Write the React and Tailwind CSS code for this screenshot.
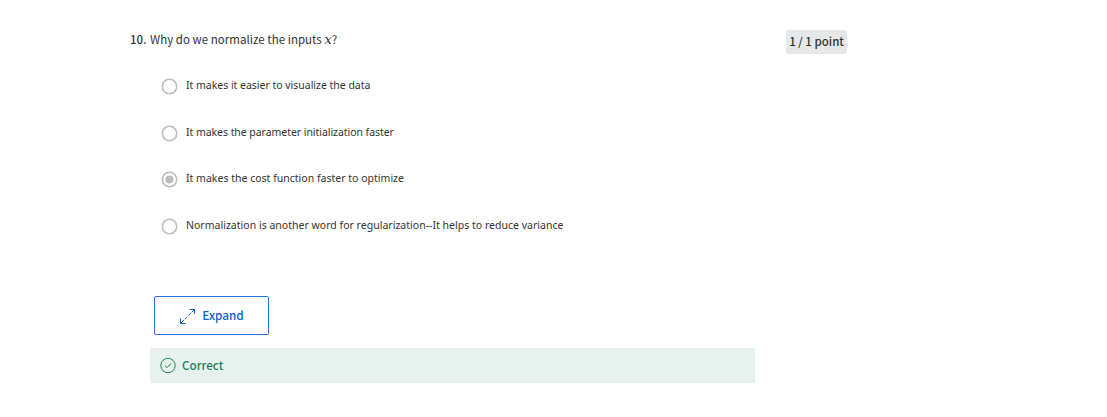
const options = [
  { text: "It makes it easier to visualize the data", row: "h-[47px]", spacing: "tracking-[-0.02px]" },
  { text: "It makes the parameter initialization faster", row: "h-[46px]", spacing: "tracking-[-0.05px]" },
  { text: "It makes the cost function faster to optimize", row: "h-[47px]", spacing: "tracking-[0.01px]", checked: true },
  { text: "Normalization is another word for regularization--It helps to reduce variance", row: "h-[47px]", spacing: "tracking-[0.015px]" },
];

function Radio({ checked }) {
  return (
    <svg className="-ml-px mt-[8px] size-[17px] shrink-0" viewBox="0 0 17 17" fill="none">
      <circle cx="8.5" cy="8.5" r="7.2" stroke="#bdbdbd" strokeWidth="1.6" />
      {checked && <circle cx="8.5" cy="8.5" r="4" fill="#bdbdbd" />}
    </svg>
  );
}

function ExpandIcon() {
  return (
    <svg className="size-4 shrink-0" viewBox="0 0 16 16" fill="none" stroke="currentColor" strokeWidth="1">
      <path d="M10.5 1.5h5V6M15.3 1.7 12.7 4.3M11.9 5.1 9.2 7.8M7.8 9.2l-2 2M5 12l-3 3M1.5 10.5v5H6.5" />
    </svg>
  );
}

function CheckIcon() {
  return (
    <svg className="size-4 shrink-0" viewBox="0 0 16 16" fill="none" stroke="currentColor" strokeWidth="1">
      <circle cx="8" cy="7.5" r="7.2" />
      <path d="m4.9 7.6 2.1 2.1 4-4.3" />
    </svg>
  );
}

export default function App() {
  return (
    <main className="flex h-[417px] w-[1107px] items-start overflow-hidden bg-white pl-[130px] font-['Noto_Sans_CJK_JP',sans-serif] text-[#333]">
      <section className="w-[656px]">
        <div className="mt-[29px] flex h-5 items-center whitespace-nowrap">
          <span className="w-[20px] text-[11.5px] font-medium leading-5">10.</span>
          <h1 className="text-[11.5px] leading-5 tracking-[0.03px]">
            Why do we normalize the inputs <span className="font-['DejaVu_Serif',serif] text-[13px] italic leading-none">x</span>?
          </h1>
        </div>
        <div className="ml-8 mt-[21px]">
          {options.map((option) => (
            <label key={option.text} className={`flex items-start font-['Noto_Sans',sans-serif] ${option.row}`}>
              <Radio checked={option.checked} />
              <span className={`ml-2 mt-[5px] whitespace-nowrap text-[10.5px] leading-5 ${option.spacing}`}>{option.text}</span>
            </label>
          ))}
        </div>
        <button className="ml-6 mt-[39px] flex h-[39px] w-[115px] items-center justify-center gap-[7px] rounded-[2px] border border-[#2a73dc] text-[11.7px] font-medium text-[#0f5fd0]">
          <ExpandIcon />
          <span className="pb-[2px]">Expand</span>
        </button>
        <div className="ml-5 mt-[13px] flex h-[35px] w-[605px] items-center gap-[6px] bg-[#e7f2ee] pl-[10px] text-[11.7px] font-medium text-[#1f8354]">
          <CheckIcon />
          <span className="pb-[2px]">Correct</span>
        </div>
      </section>
      <div className="mt-[30px] flex h-6 w-[61px] items-center justify-center whitespace-nowrap rounded-[3px] bg-[#e5e7e8] pb-px text-[11.5px] font-medium">1 / 1 point</div>
    </main>
  );
}
